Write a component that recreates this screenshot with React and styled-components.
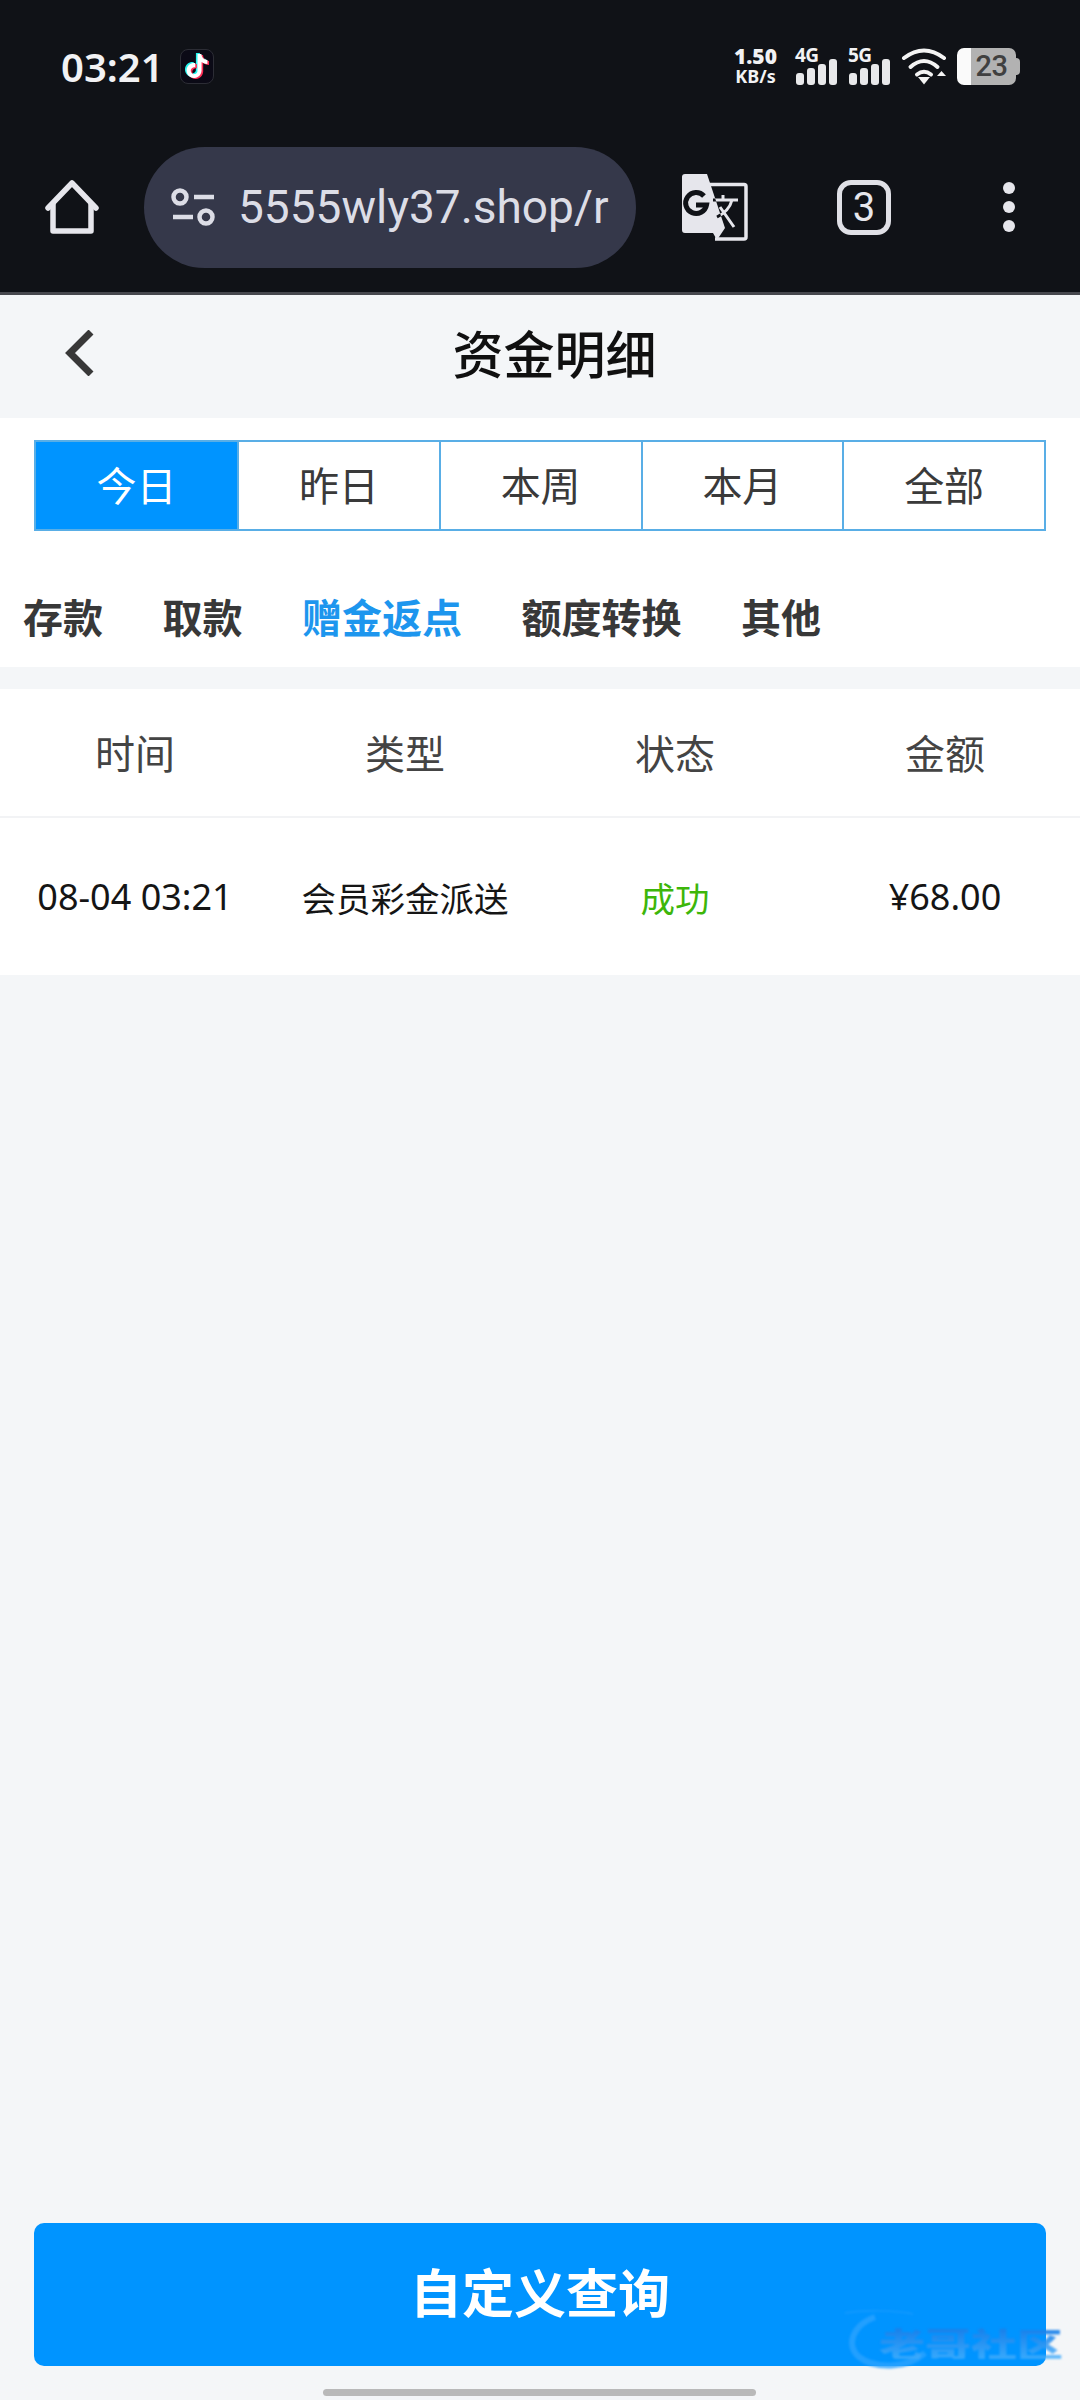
import React from "react";
import styled, { createGlobalStyle } from "styled-components";

const Global = createGlobalStyle`
  html, body { margin: 0; padding: 0; background: #f4f6f8; }
  * { box-sizing: border-box; }
  body { font-family: "Noto Sans", "Noto Sans CJK SC", sans-serif; }
`;
const Page = styled.div`
  position: relative; width: 1080px; height: 2400px; display: flex; flex-direction: column;
  background: #f4f6f8; overflow: hidden;
`;
const Chrome = styled.header`
  background: #101217; border-bottom: 3px solid #47484e; height: 295px; flex: none;
`;
const StatusBar = styled.div`
  height: 132px; display: flex; align-items: center; padding: 0 60px 0 61px; color: #f2f2f4;
`;
const Time = styled.span`font: 600 40px "Noto Sans", sans-serif;`;
const AppBadge = styled.span`
  width: 34px; height: 35px; margin-left: 16px; border-radius: 8px; background: #0b0a16;
  border: 1px solid #2c2d35; display: flex; align-items: center; justify-content: center;
`;
const StatusRight = styled.div`margin-left: auto; display: flex; align-items: center; height: 38px;`;
const Speed = styled.div`
  display: flex; flex-direction: column; align-items: center; font-family: "Noto Sans", sans-serif; font-weight: 700;
  line-height: 1; margin-right: 18px;
  b { font-size: 21px; line-height: 20px; }
  small { font-size: 18px; line-height: 20px; font-weight: 700; }
`;
const Signal = styled.div`
  position: relative; width: 44px; height: 38px; margin-right: 9px;
  span { position: absolute; left: 0; top: -3px; font: 700 19px/22px "Noto Sans", sans-serif; letter-spacing: -0.5px; }
  svg { position: absolute; left: 1px; bottom: 0; }
`;
const Battery = styled.div`
  position: relative; width: 59px; height: 37px; margin: 0 4px 0 10px; border-radius: 7px; color: #404040;
  background: linear-gradient(90deg, #fafafa 0 14px, #b2b2b2 14px);
  display: flex; align-items: center; justify-content: center; padding-left: 10px;
  font: 500 29px "Roboto", sans-serif; letter-spacing: -0.5px;
  &::after {
    content: ""; position: absolute; right: -4px; top: 10px; width: 4px; height: 17px;
    border-radius: 0 4px 4px 0; background: #b2b2b2;
  }
`;
const Toolbar = styled.div`
  height: 160px; display: flex; align-items: center; padding: 0 0 10px 45px; color: #e6e6ec;
`;
const ToolButton = styled.span`display: flex; margin-left: ${p => p.$gap || 0}px;`;
const AddressPill = styled.div`
  width: 492px; height: 121px; margin-left: 45px; border-radius: 61px; background: #35384a;
  display: flex; align-items: center; padding: 0 26px 0 27px; overflow: hidden;
`;
const Url = styled.span`
  margin-left: 23px; font: 400 46px "Roboto", sans-serif; color: #dcdde6; white-space: nowrap; overflow: hidden; flex: 1;
`;
const TabCount = styled.span`
  width: 54px; height: 55px; margin-left: 89px; border: 5px solid #e0e0e6; border-radius: 14px;
  display: flex; align-items: center; justify-content: center; font: 400 40px "Roboto", sans-serif;
`;
const NavBar = styled.div`
  height: 123px; flex: none; display: grid; grid-template-columns: 1fr auto 1fr; align-items: center; padding: 0 36px 8px 65px;
`;
const Title = styled.h1`
  margin: 0; font-size: 51px; font-weight: 500; color: #101010; line-height: 1.2;
  font-family: "Noto Sans CJK SC", sans-serif;
`;
const FilterPanel = styled.section`background: #fff; height: 249px; flex: none; padding-top: 22px;`;
const Segments = styled.div`
  margin: 0 34px; height: 91px; display: grid; grid-template-columns: 201px repeat(4, 1fr); border: 2px solid #59aee6;
`;
const Segment = styled.div`
  display: flex; align-items: center; justify-content: center; font-size: 40px; font-weight: 400; padding-bottom: 4px;
  font-family: "Noto Sans CJK SC", sans-serif;
  color: ${p => (p.$active ? "#fff" : "#3a3a3a")};
  background: ${p => (p.$active ? "#0094ff" : "#fff")};
  & + & { border-left: 2px solid #59aee6; }
`;
const Categories = styled.div`display: flex; gap: 59.5px; padding: 59px 0 0 23px;`;
const Category = styled.span`
  font: 700 40px/1.3 "Noto Sans CJK SC", sans-serif; color: ${p => (p.$active ? "#1d96ee" : "#383838")};
`;
const Table = styled.section`margin-top: 22px; background: #fff; flex: none;`;
const Row = styled.div`
  display: grid; grid-template-columns: repeat(4, 1fr); align-items: center; text-align: center;
  height: ${p => p.$h}px; ${p => p.$line && "border-bottom: 2px solid #f2f3f5;"}
`;
const HeadCell = styled.div`font: 400 40px "Noto Sans CJK SC", sans-serif; color: #444; padding-bottom: 2px;`;
const Cell = styled.div`
  font: 400 ${p => (p.$num ? 36 : 34.5)}px "Noto Sans", "Noto Sans CJK SC", sans-serif;
  color: ${p => p.$color || "#151515"}; white-space: nowrap;
`;
const Spacer = styled.div`flex: 1;`;
const Footer = styled.footer`padding: 0 34px 34px; flex: none;`;
const QueryButton = styled.button`
  display: block; width: 100%; height: 143px; border: 0; border-radius: 10px; background: #0094ff; color: #fff;
  font: 700 52px "Noto Sans CJK SC", sans-serif; padding: 0 0 9px;
`;
const HomeBar = styled.div`
  position: absolute; left: 323px; bottom: 4px; width: 433px; height: 7px; border-radius: 4px; background: #b9b9b9;
`;
const Watermark = styled.div`
  position: absolute; left: 845px; top: 2307px; width: 222px; height: 66px; filter: blur(1.2px); pointer-events: none;
  svg { position: absolute; left: 0; top: 0; }
  span {
    position: absolute; left: 34px; top: 14px; font: 900 46px/44px "Noto Sans CJK SC", sans-serif; white-space: nowrap;
    transform: scaleY(0.72);
    background: linear-gradient(180deg, rgba(24,125,232,.95), rgba(70,175,252,.8));
    -webkit-background-clip: text; background-clip: text; -webkit-text-fill-color: transparent;
  }
`;

const TIKTOK = "M12.525.02c1.31-.02 2.61-.01 3.91-.02.08 1.53.63 3.09 1.75 4.17 1.12 1.11 2.7 1.62 4.24 1.79v4.03c-1.44-.05-2.89-.35-4.2-.97-.57-.26-1.1-.59-1.62-.93-.01 2.92.01 5.84-.02 8.75-.08 1.4-.54 2.79-1.35 3.94-1.31 1.92-3.58 3.17-5.91 3.21-1.43.08-2.86-.31-4.08-1.03-2.02-1.19-3.44-3.37-3.65-5.71-.02-.5-.03-1-.01-1.49.18-1.9 1.12-3.72 2.58-4.96 1.66-1.44 3.98-2.13 6.15-1.72.02 1.48-.04 2.96-.04 4.44-.99-.32-2.15-.23-3.02.37-.63.41-1.11 1.04-1.36 1.75-.21.51-.15 1.07-.14 1.61.24 1.64 1.82 3.02 3.5 2.87 1.12-.01 2.19-.66 2.77-1.61.19-.33.4-.67.41-1.06.1-1.79.06-3.57.07-5.36.01-4.03-.01-8.05.02-12.07z";

const TikTokIcon = () => (
  <svg width="26" height="28" viewBox="-1 -1 26 26">
    <path d={TIKTOK} fill="#25f4ee" transform="translate(-1.6 -1)" />
    <path d={TIKTOK} fill="#fe2c55" transform="translate(1.6 1)" />
    <path d={TIKTOK} fill="#fff" />
  </svg>
);
const Bars = () => (
  <svg width="42" height="26" viewBox="0 0 42 26" fill="#e8e8ea">
    <rect x="0" y="14" width="8" height="12" rx="3" />
    <rect x="11" y="9" width="8" height="17" rx="3" />
    <rect x="22" y="5" width="8" height="21" rx="3" />
    <rect x="33" y="0" width="8" height="26" rx="3" />
  </svg>
);
const Wifi = () => (
  <svg width="46" height="38" viewBox="0 0 46 38" fill="none" stroke="#f4f4f4" strokeWidth="4" strokeLinecap="round">
    <path d="M3 11Q23 -4 43 11" />
    <path d="M9.5 20Q23 8 36.5 20" />
    <path d="M16 27.5Q23 22 30 27.5" />
    <path d="M17 30H29L23 37.5z" fill="#f4f4f4" stroke="none" />
    <path d="M36 29L40.5 24L45 29z" fill="#f4f4f4" stroke="none" />
  </svg>
);
const HomeIcon = () => (
  <svg width="54" height="54" viewBox="0 0 54 54" fill="none" stroke="currentColor" strokeWidth="5.5" strokeLinejoin="round" strokeLinecap="round">
    <path d="M3 28L27 3L51 28" />
    <path d="M8 24V51H46V24" />
  </svg>
);
const SiteInfoIcon = () => (
  <svg width="44" height="38" viewBox="0 0 44 38" fill="none" stroke="#dcdde6" strokeWidth="4.5">
    <circle cx="9" cy="9" r="6.5" />
    <path d="M23 9H43" />
    <path d="M2 29H22" />
    <circle cx="35" cy="29" r="6.5" />
  </svg>
);
const DOC = "M4 0H26L44 54L36 66L32 59H4A3 3 0 0 1 1 56V3A3 3 0 0 1 4 0Z";
const GLYPH = "M32 26H57M42 21V26M51 26C49 34 44 39 36 43M39 33L53 53";
const TranslateIcon = () => (
  <svg width="67" height="67" viewBox="0 0 67 67">
    <defs>
      <clipPath id="translate-doc"><path d={DOC} /></clipPath>
    </defs>
    <path d="M24 10.5H63A2 2 0 0 1 65 12.5V63A2 2 0 0 1 63 65H34" fill="none" stroke="#e6e6ec" strokeWidth="3.5" />
    <path d={GLYPH} fill="none" stroke="#e6e6ec" strokeWidth="3" />
    <path d={DOC} fill="#e6e6ec" />
    <path d={GLYPH} fill="none" stroke="#101217" strokeWidth="3" clipPath="url(#translate-doc)" />
    <path d="M23 22A10.5 10.5 0 1 0 25.5 31H15" fill="none" stroke="#101217" strokeWidth="5" />
  </svg>
);
const MenuIcon = () => (
  <svg width="14" height="50" viewBox="0 0 14 50" fill="#e6e6ec">
    <circle cx="7" cy="6" r="6" />
    <circle cx="7" cy="25" r="6" />
    <circle cx="7" cy="44" r="6" />
  </svg>
);
const BackIcon = () => (
  <svg width="30" height="46" viewBox="0 0 30 46" fill="none" stroke="#383838" strokeWidth="7" strokeLinecap="butt">
    <path d="M26 2L5 23L26 44" />
  </svg>
);

const segments = ["今日", "昨日", "本周", "本月", "全部"];
const categories = ["存款", "取款", "赠金返点", "额度转换", "其他"];
const heads = ["时间", "类型", "状态", "金额"];

export default function App() {
  return (
    <Page>
      <Global />
      <Chrome>
        <StatusBar>
          <Time>03:21</Time>
          <AppBadge><TikTokIcon /></AppBadge>
          <StatusRight>
            <Speed><b>1.50</b><small>KB/s</small></Speed>
            <Signal><span>4G</span><Bars /></Signal>
            <Signal><span>5G</span><Bars /></Signal>
            <Wifi />
            <Battery>23</Battery>
          </StatusRight>
        </StatusBar>
        <Toolbar>
          <ToolButton><HomeIcon /></ToolButton>
          <AddressPill>
            <SiteInfoIcon />
            <Url>5555wly37.shop/r</Url>
          </AddressPill>
          <ToolButton $gap={45}><TranslateIcon /></ToolButton>
          <TabCount>3</TabCount>
          <ToolButton $gap={111}><MenuIcon /></ToolButton>
        </Toolbar>
      </Chrome>
      <NavBar>
        <BackIcon />
        <Title>资金明细</Title>
        <span />
      </NavBar>
      <FilterPanel>
        <Segments>
          {segments.map((s, i) => <Segment key={s} $active={i === 0}>{s}</Segment>)}
        </Segments>
        <Categories>
          {categories.map((c, i) => <Category key={c} $active={i === 2}>{c}</Category>)}
        </Categories>
      </FilterPanel>
      <Table>
        <Row $h={129} $line>
          {heads.map(h => <HeadCell key={h}>{h}</HeadCell>)}
        </Row>
        <Row $h={157}>
          <Cell $num>08-04 03:21</Cell>
          <Cell>会员彩金派送</Cell>
          <Cell $color="#3db60a">成功</Cell>
          <Cell $num>¥68.00</Cell>
        </Row>
      </Table>
      <Spacer />
      <Footer>
        <QueryButton>自定义查询</QueryButton>
      </Footer>
      <HomeBar />
      <Watermark>
        <svg width="90" height="66" viewBox="0 0 90 66" fill="none" stroke="#2ba3ff" strokeWidth="6" opacity="0.8">
          <path d="M30 10C8 18 0 38 14 50C30 62 62 62 80 46" />
          <path d="M0 6C20 3 50 3 68 7" strokeWidth="2" opacity="0.5" />
        </svg>
        <span>老哥社区</span>
      </Watermark>
    </Page>
  );
}
